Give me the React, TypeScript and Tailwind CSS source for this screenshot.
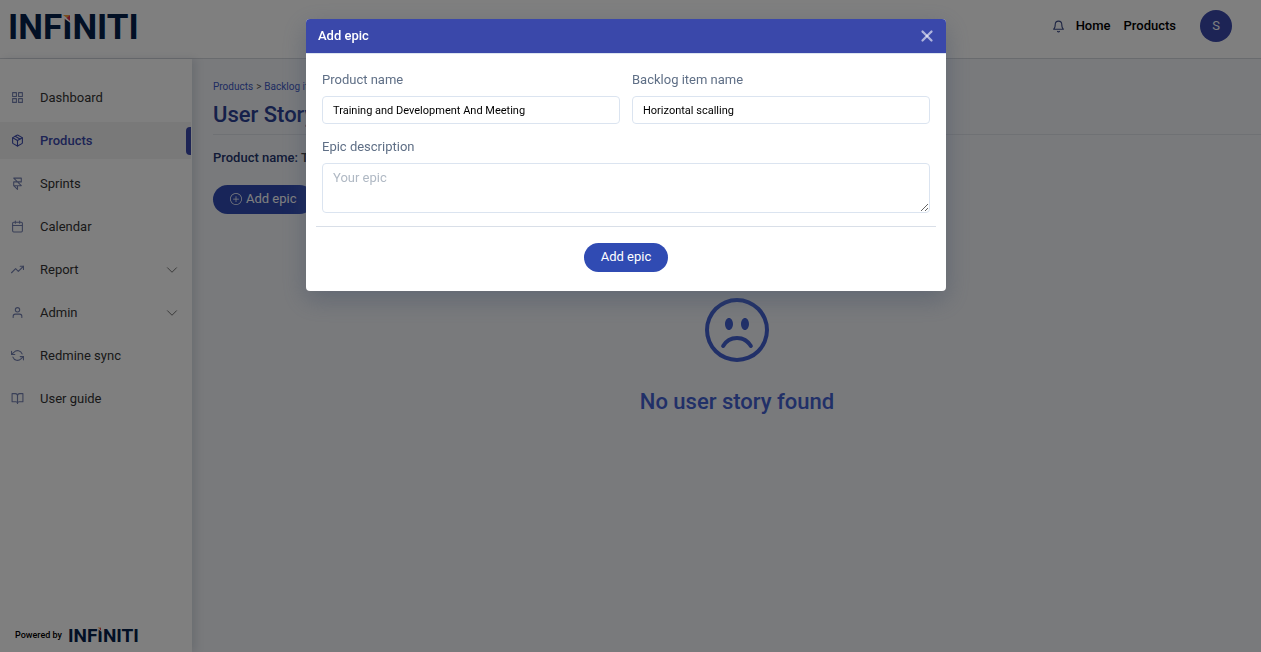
import { useState } from 'react'
import clsx from 'clsx'
import { BsEmojiFrown, BsPlusCircle } from 'react-icons/bs'
import {
    FiBell,
    FiBookOpen,
    FiCalendar,
    FiFramer,
    FiGrid,
    FiPackage,
    FiRefreshCcw,
    FiTrendingUp,
    FiUser,
} from 'react-icons/fi'
import { ChevronDown, X } from 'lucide-react'

const menu = [
    { label: 'Dashboard', icon: FiGrid },
    { label: 'Products', icon: FiPackage, active: true },
    { label: 'Sprints', icon: FiFramer },
    { label: 'Calendar', icon: FiCalendar },
    { label: 'Report', icon: FiTrendingUp, expandable: true },
    { label: 'Admin', icon: FiUser, expandable: true },
    { label: 'Redmine sync', icon: FiRefreshCcw },
    { label: 'User guide', icon: FiBookOpen },
]

function Logo({ small = false }: { small?: boolean }) {
    return (
        <span className={clsx('block font-bold text-[#04214a]', small ? 'text-[19px] leading-5' : 'text-[35px] leading-9')}>
            INF
            <span className="relative">
                I
                {/* Flag over the third I */}
                <svg
                    viewBox="0 0 10 10"
                    className={clsx('absolute left-0', small ? 'top-[3px] size-[5px]' : 'top-[7px] size-[10px]')}
                >
                    <path d="M0 0H10V10L0 3Z" fill="#fff" />
                    <path d="M1 1H8L5 4Z" fill="#f5a13a" />
                    <path d="M8 1V7L4.5 4Z" fill="#d8324a" />
                </svg>
            </span>
            NITI
        </span>
    )
}

function Header() {
    return (
        <header className="flex h-[59px] items-center justify-between border-b border-[#d3d6dc] bg-white pr-[29px] pl-2">
            <a href="#" className="pb-[2px]"><Logo /></a>
            <nav className="flex items-center pb-[6px] text-[13px] font-medium text-black">
                <button aria-label="Notifications" className="mr-[11px] text-[#3b4a86]">
                    <FiBell size={13} />
                </button>
                <a href="#" className="mr-[13px]">Home</a>
                <a href="#" className="mr-6">Products</a>
                <button className="size-8 rounded-full bg-[#3a48aa] text-[13px] font-normal text-white">S</button>
            </nav>
        </header>
    )
}

function Sidebar() {
    return (
        <aside className="z-10 flex w-48 shrink-0 flex-col justify-between bg-white pt-5 pb-[6px] shadow-[4px_0_8px_rgba(70,85,110,0.16)]">
            <nav className="flex flex-col gap-[6px]">
                {menu.map(({ label, icon: Icon, active, expandable }) => (
                    <a
                        key={label}
                        href="#"
                        className={clsx(
                            'mr-px flex h-[37px] items-center text-[13px]',
                            active ? 'bg-[#f3f3f3] font-medium text-[#3a48aa]' : 'text-[#333]'
                        )}
                    >
                        <Icon size={13} className={clsx('mr-4 ml-[11px]', active ? 'text-[#3a48aa]' : 'text-[#7480b0]')} />
                        <span className="flex-1">{label}</span>
                        {expandable && <ChevronDown size={18} strokeWidth={1} className="mr-[10px] text-[#444]" />}
                        {active && <span className="h-7 w-[5px] rounded-l bg-[#3a48aa]" />}
                    </a>
                ))}
            </nav>
            <div className="flex items-center gap-[6px] pl-[15px] text-[9px] font-medium text-black">
                <span>Powered by</span>
                <Logo small />
            </div>
        </aside>
    )
}

function Content() {
    return (
        <main className="flex-1 bg-[#f2f4f8] pt-5 pl-[21px]">
            <div className="flex gap-[3px] text-[10px] leading-4 text-[#4059c4]">
                <a href="#">Products</a>
                <span className="text-[#555]">&gt;</span>
                <a href="#">Backlog items</a>
            </div>
            <h1 className="border-b border-[#dfe2e8] pt-1 pb-[3px] text-[22px] leading-8 font-medium text-[#2a4094]">User Story</h1>
            <p className="pt-[13px] text-[13px] leading-5 font-medium text-[#24366f]">
                Product name: <span className="text-[#333]">Training and Development And Meeting</span>
            </p>
            <button className="mt-[17px] flex h-[29px] items-center gap-1 rounded-full bg-[#304bb3] px-[17px] pb-[2px] text-[13px] text-white">
                <BsPlusCircle size={12} />
                Add epic
            </button>
            <div className="flex flex-col items-center pt-[84px] text-[#4260d0]">
                <BsEmojiFrown size={64} />
                <h2 className="mt-6 text-[22px] leading-8 font-medium">No user story found</h2>
            </div>
        </main>
    )
}

const labelClass = 'mb-[6px] block text-[13px] leading-5 text-[#5f6f86]'
const fieldClass = 'block w-full rounded border border-[#dbe4f0] bg-white px-[10px] outline-none'

function AddEpicModal() {
    const [product, setProduct] = useState('Training and Development And Meeting')
    const [backlog, setBacklog] = useState('Horizontal scalling')
    const [epic, setEpic] = useState('')

    return (
        <div className="fixed inset-0 z-50 flex items-start justify-center bg-black/50 pt-[19px] pr-[9px]">
            <form
                role="dialog"
                aria-labelledby="modal-title"
                onSubmit={(e) => e.preventDefault()}
                className="w-full max-w-[640px] overflow-hidden rounded bg-white shadow-[0_8px_24px_rgba(60,75,100,0.4)]"
            >
                <div className="flex h-[35px] items-center justify-between border-b border-[#dbe4f0] bg-[#3a48aa] pr-[10px] pl-3 text-white">
                    <h2 id="modal-title" className="text-[13px] font-medium">Add epic</h2>
                    <button type="button" aria-label="Close" className="text-white/60">
                        <X size={18} strokeWidth={3} />
                    </button>
                </div>

                <div className="px-4 pt-4 pb-[19px]">
                    <div className="grid grid-cols-2 gap-3">
                        <div>
                            <label htmlFor="product" className={labelClass}>Product name</label>
                            <input
                                id="product"
                                value={product}
                                onChange={(e) => setProduct(e.target.value)}
                                className={clsx(fieldClass, 'h-7 text-[11px] text-black')}
                            />
                        </div>
                        <div>
                            <label htmlFor="backlog" className={labelClass}>Backlog item name</label>
                            <input
                                id="backlog"
                                value={backlog}
                                onChange={(e) => setBacklog(e.target.value)}
                                className={clsx(fieldClass, 'h-7 text-[11px] text-black')}
                            />
                        </div>
                    </div>
                    <div className="mt-[13px]">
                        <label htmlFor="epic" className={labelClass}>Epic description</label>
                        <textarea
                            id="epic"
                            placeholder="Your epic"
                            value={epic}
                            onChange={(e) => setEpic(e.target.value)}
                            className={clsx(fieldClass, 'h-[50px] resize-y py-1 text-[13px] leading-5 text-black placeholder:text-[#b0b9c4]')}
                        />
                    </div>
                    <hr className="-mx-[6px] mt-[13px] border-[#d9dfe8]" />
                    <div className="mt-4 flex justify-center">
                        <button type="submit" className="h-[29px] rounded-full bg-[#304bb3] px-[17px] pb-[2px] text-[13px] text-white">
                            Add epic
                        </button>
                    </div>
                </div>
            </form>
        </div>
    )
}

export default function App() {
    return (
        <div className="flex min-h-screen flex-col font-['Roboto',sans-serif]">
            <Header />
            <div className="flex flex-1">
                <Sidebar />
                <Content />
            </div>
            <AddEpicModal />
        </div>
    )
}
